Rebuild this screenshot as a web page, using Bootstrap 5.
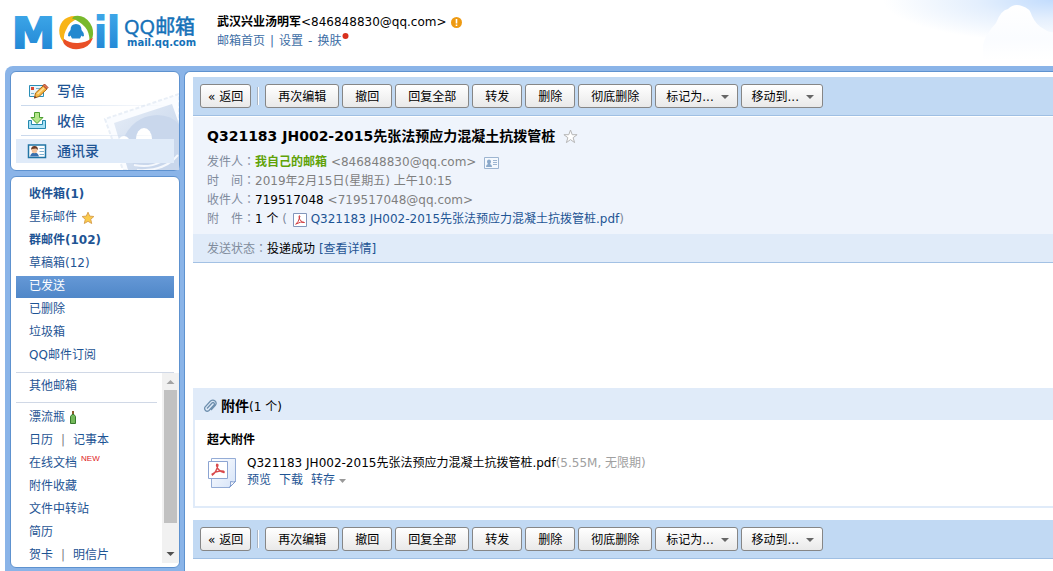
<!DOCTYPE html>
<html lang="zh-CN">
<head>
<meta charset="utf-8">
<meta name="viewport" content="width=device-width, initial-scale=1">
<title>QQ邮箱</title>
<link href="https://cdn.jsdelivr.net/npm/bootstrap@5.3.0/dist/css/bootstrap.min.css" rel="stylesheet">
<style>
body{font:12px/19px "DejaVu Sans","Noto Sans CJK SC",sans-serif;color:#000;background:#fff;height:100vh}
a{color:#1e5494;text-decoration:none}
a:hover{text-decoration:underline}
.colon{font-family:"Noto Sans CJK TC",sans-serif;line-height:1}
.top-bar{height:66px;padding:0 0 0 8px}
.sky{right:0;top:0;z-index:-1}
.account{padding:13px 0 0 19px}
.account a,.account-links{color:#3d6ea5}
.account-links{gap:5px}
.new-dot{margin-left:-5px}
.frame{background:#8ab4e8;border-radius:8px 0 0 0;margin-left:5px;padding:5px 0 0 5px;min-height:0}
.side{width:170px;gap:5px;padding-bottom:3px;margin-right:4px}
.panel{background:#fff;border:1px solid #5e92cf;border-radius:6px}
.main-actions{height:100px;padding:7px 5px}
.main-actions a{height:24px;font-size:14px;line-height:24px;padding-left:11px;gap:8px;font-weight:500}
.main-actions a.current{background:#e0ebf9}
.main-actions .rule{height:1px;margin:2px 5px 3px;background:linear-gradient(90deg,#c9d8ec,#fff0)}
.stamp{right:0;bottom:0}
.folders{padding:7px 5px 0}
.folders a{padding-left:13px;height:22px;line-height:21px;margin-bottom:1px}
.folders a.current{background:linear-gradient(#6598d6,#4f87c8);color:#fff}
.line{border-top:1px solid #d0d8e6}
.more{padding:2px 0 0 5px}
.more .entry{padding-left:13px;line-height:23px;height:23px}
.more .line{margin:4px 5px 3px 0}
.new-tag{font:8px/10px "Liberation Sans",sans-serif;color:#e01818;margin-left:4px;vertical-align:6px}
.scroll{width:17px;background:#f1f1f1;padding:0 2px}
.thumb{background:#c1c1c1;width:13px;height:133px}
.scroll svg{height:17px;width:13px;flex:none}
.reader{background:#fff;border:1px solid #5e92cf;border-width:1px 0 0 1px;border-radius:6px 0 0 0;padding:5px 0 0 8px;min-width:0;overflow:hidden}
.tools{background:#c1d9f3;border-bottom:1px solid #9fbfe3;height:39px;padding:7px;gap:3px}
.tools .btn{font-size:12px;line-height:20px;height:24px;padding:2px 12px;border:1px solid #868686;border-radius:3px;background:linear-gradient(#fff,#e9e9e9);color:#000;white-space:nowrap}
.tools .btn.back{padding:2px 7px}
.tools .btn.menu{padding:2px 8px 2px 10px}
.tools .btn.menu svg{margin-left:3px}
.tools .sep{width:2px;height:18px;margin:0 3px;background:linear-gradient(90deg,#a9b4c2 50%,#fff 50%)}
.mail-head{background:#eff4fc;border-top:1px solid #fff;padding:9px 14px 5px}
.mail-head h1{font-size:14px;line-height:21px;font-weight:700;margin-bottom:6px}
.mail-head h1 svg{margin-left:8px}
.mail-head div{height:19px}
.mail-head,.status{color:#7f8b9c}
.soft{color:#7f7f7f}
.sender{color:#5fa207;font-weight:700}
.status{background:#e0ebf9;border-bottom:1px solid #a3c1e4;padding:6px 14px 3px;height:29px}
.mail-body{height:125px}
.attach{border:2px solid #e0ebf9;border-width:0 0 2px 2px;margin-bottom:12px}
.attach h2{background:#e0ebf9;font-size:12px;line-height:32px;height:32px;padding-top:4px;padding-left:8px;gap:4px}
.attach h2 b{font-size:14px}
.attach-list{padding:11px 12px 17px}
.attach-list h3{font-size:12px;line-height:19px;font-weight:700;margin:0 0 5px}
.file{gap:10px;line-height:17px}
.file>svg{margin-top:2px;margin-bottom:-2px}
.file .acts{gap:8px}
.file-info{color:#a0a0a0}
</style>
</head>
<body class="d-flex flex-column overflow-hidden">
<header class="top-bar d-flex flex-shrink-0 position-relative">
  <svg class="sky position-absolute" width="180" height="66" viewBox="0 0 180 66" aria-hidden="true">
    <defs>
      <radialGradient id="sky" gradientUnits="userSpaceOnUse" cx="0" cy="0" r="1" gradientTransform="translate(180 0) scale(170 42)"><stop offset="0" stop-color="#c2dcfd"/><stop offset=".45" stop-color="#e4effd"/><stop offset="1" stop-color="#fff"/></radialGradient>
      <linearGradient id="cloud" x2="0" y2="1"><stop offset="0" stop-color="#fff"/><stop offset=".6" stop-color="#fafcff"/><stop offset="1" stop-color="#fff"/></linearGradient>
    </defs>
    <path fill="url(#sky)" d="M0 0H180V45H0z"/>
    <path fill="url(#cloud)" d="M110 45q2-10 13-22 5-13 12-14 6-6 14-3 8 2 10 10 4 9 12 13 6 4 9 3V60H110z"/>
  </svg>
  <svg class="flex-shrink-0" width="190" height="60" viewBox="8 0 190 60" role="img" aria-label="QQ邮箱">
    <defs><linearGradient id="blue" gradientUnits="userSpaceOnUse" x1="0" y1="14" x2="0" y2="49"><stop offset="0" stop-color="#3da6e8"/><stop offset="1" stop-color="#2389d6"/></linearGradient></defs>
    <g fill="url(#blue)" font-family="DejaVu Sans" font-weight="700">
      <text x="12" y="48" font-size="43" stroke="url(#blue)" stroke-width="2">M</text>
      <text y="48" x="93 106" font-size="44">il</text>
    </g>
    <circle cx="76" cy="32.500" r="19" fill="#fff"/>
    <path fill="#f8b416" d="M75 16C64 16 58 24 59.500 34q1 6 5.500 9.500-2.500-6 .5-12.500Q69 21 79 18.500q2-.5 2-1-3-1.500-6-1.500z"/>
    <path fill="#78b92c" d="M75 16q9-1.500 15 7 4.500 7 2.500 14.500l-3 3.500q0-9-4.500-14Q79 20.500 72 18.500q1-2 3-2.500z"/>
    <path fill="#e94f26" d="M64 39q6 4.500 14 4 8-.5 12.500-4 3-2 2 0Q89 48 79 49q-9 1-14-4-3-3-1-6z"/>
    <path fill="#2388cf" d="M76 24q5.500 0 5.500 6 3 3 2.500 6-1.500 1-2.500-.5l-1.500 3h-8l-1.500-3q-1 1.500-2.500.5-.5-3 2.500-6 0-6 5.500-6z"/>
    <g fill="#1471b8" stroke="#1471b8">
      <text x="124" y="34" font-size="20" font-family="Open Sans, Noto Sans CJK SC" stroke-width=".5">QQ<tspan font-family="Noto Sans CJK SC">邮箱</tspan></text>
      <text x="127" y="46" font-size="10" font-family="DejaVu Sans" font-weight="700" stroke="none">mail.qq.com</text>
    </g>
  </svg>
  <div class="account">
    <div class="d-flex align-items-center"><b>武汉兴业汤明军</b><span>&lt;846848830@qq.com&gt;</span>
      <svg class="ms-1" width="11" height="11" viewBox="0 0 11 11" aria-hidden="true"><circle cx="5.500" cy="5.500" r="5.500" fill="#ee9a12"/><path fill="#fff" d="M4.700 2h1.600v4.500H4.700zM4.700 7.500h1.600V9H4.700z"/></svg></div>
    <nav class="account-links d-flex"><a href="#">邮箱首页</a><span>|</span><a href="#">设置</a><span>-</span><a href="#">换肤</a>
      <svg class="new-dot" width="8" height="8" viewBox="0 0 8 8" aria-hidden="true"><circle cx="4.500" cy="4" r="3" fill="#d8301d"/></svg></nav>
  </div>
</header>

<div class="frame d-flex flex-grow-1">
  <aside class="side d-flex flex-column flex-shrink-0">
    <nav class="panel main-actions position-relative flex-shrink-0">
      <svg class="stamp position-absolute" width="77" height="78" viewBox="0 0 77 78" aria-hidden="true">
        <defs><linearGradient id="st" x2="1" y2="1"><stop offset="0" stop-color="#e6edf7"/><stop offset="1" stop-color="#c3d3ea"/></linearGradient></defs>
        <path d="M77 2 3 27l18 51h56z" fill="#fafcff" stroke="#e9eff7" stroke-width="2" stroke-dasharray="4 2"/>
        <path d="M70 12 12 31l14 47h51V32z" fill="url(#st)"/>
        <path d="M20 50Q30 24 55 23q15 0 22 10v45H40q-18-10-20-28z" fill="#c9d7ec"/>
        <ellipse cx="42" cy="47" rx="8" ry="11" fill="#fff"/><ellipse cx="22" cy="51" rx="6" ry="7" fill="#fff"/>
        <path d="M32 73q25 5 39-14M35 78q27 2 41-15" fill="none" stroke="#f5f8fd" stroke-width="2"/>
      </svg>
      <a href="#" class="d-flex align-items-center position-relative">
        <svg width="22" height="18" viewBox="0 0 22 18"><path fill="#eaf6fc" stroke="#2a8eb6" d="M2.500 3.500h14v11h-14z"/><path fill="#d94a32" d="M4 5h3v3H4z"/><path stroke="#7bb2cd" d="M9 6.500h4M4 11.500h3"/><path fill="#f9b945" stroke="#a86a16" d="m7.500 16 1-5 8-7.500 3.500 3.500-8 7.500z"/><path fill="#e37850" stroke="#a9452c" d="m16 3.500 1.500-1.500 3.500 3.500-1.500 1.500z"/><path fill="#fde2a0" d="m10 11.500 6.500-6 1 1-6.500 6z"/><path fill="#634" d="m7 16.500 1-2.500 1.500 1.500z"/></svg>写信</a>
      <div class="rule position-relative"></div>
      <a href="#" class="d-flex align-items-center position-relative">
        <svg width="22" height="18" viewBox="0 0 22 18"><path fill="#a9e1f5" stroke="#2489ae" d="M1.500 8.500h3v4h11v-4h3v8h-17z"/><path fill="#b5e68a" stroke="#4a9d2f" d="M7.500.5h5v5h3.500L10 11.500 4 5.500h3.500z"/></svg>收信</a>
      <div class="rule position-relative"></div>
      <a href="#" class="current d-flex align-items-center position-relative">
        <svg width="22" height="18" viewBox="0 0 22 18"><path fill="#fff" stroke="#2275a5" stroke-width="1.500" d="M1.500 3h17v12.500h-17z"/><path fill="#3970ae" d="M3 14.500q1-4 4.500-4t4.500 4z"/><circle cx="7.500" cy="8.500" r="2.800" fill="#f4c39b"/><path fill="#6d3b24" d="M4 8q0-4 3.500-4T11 8L9 6.500 5 7z"/><path stroke="#7eb0d0" d="M12.500 6.500H17M12.500 9.500H17M12.500 12.500H17"/></svg>通讯录</a>
    </nav>
    <div class="panel d-flex flex-column flex-grow-1 overflow-hidden">
      <nav class="folders d-flex flex-column flex-shrink-0">
        <a href="#"><b>收件箱(1)</b></a>
        <a href="#">星标邮件 <svg width="14" height="14" viewBox="0 0 14 14" aria-hidden="true"><path fill="#fbcb4b" stroke="#d9a353" d="m7 1.200 1.700 3.900 4.200.4-3.200 2.800 1 4.200L7 10.300l-3.700 2.200 1-4.200L1.100 5.500l4.200-.4z"/></svg></a>
        <a href="#"><b>群邮件(102)</b></a>
        <a href="#">草稿箱(12)</a>
        <a href="#" class="current" aria-current="page">已发送</a>
        <a href="#">已删除</a>
        <a href="#">垃圾箱</a>
        <a href="#">QQ邮件订阅</a>
        <div class="line mt-1"></div>
      </nav>
      <div class="d-flex flex-grow-1 overflow-hidden mb-1">
        <nav class="more flex-grow-1">
          <div class="entry"><a href="#">其他邮箱</a></div>
          <div class="line"></div>
          <div class="entry"><a href="#">漂流瓶 <svg width="8" height="13" viewBox="0 0 8 13" aria-hidden="true"><path fill="#8a5a2b" d="M3 0h2v3H3z"/><path fill="#74b95a" stroke="#397a2c" d="M3 3.500h2l1.500 2v7h-5v-7z"/></svg></a></div>
          <div class="entry"><a href="#">日历</a><span class="soft px-2">|</span><a href="#">记事本</a></div>
          <div class="entry"><a href="#">在线文档<span class="new-tag">NEW</span></a></div>
          <div class="entry"><a href="#">附件收藏</a></div>
          <div class="entry"><a href="#">文件中转站</a></div>
          <div class="entry"><a href="#">简历</a></div>
          <div class="entry"><a href="#">贺卡</a><span class="soft px-2">|</span><a href="#">明信片</a></div>
        </nav>
        <div class="scroll d-flex flex-column flex-shrink-0" aria-hidden="true">
          <svg viewBox="0 0 13 17"><path fill="#a3a3a3" d="m2.500 11 4-4 4 4z"/></svg>
          <div class="thumb"></div>
          <svg class="mt-auto" viewBox="0 0 13 17"><path fill="#505050" d="m2.500 6 4 4 4-4z"/></svg>
        </div>
      </div>
    </div>
  </aside>

  <main class="reader flex-grow-1">
    <div class="tools d-flex" role="toolbar">
      <button type="button" class="btn back">« 返回</button><span class="sep align-self-center"></span>
      <button type="button" class="btn">再次编辑</button>
      <button type="button" class="btn">撤回</button>
      <button type="button" class="btn">回复全部</button>
      <button type="button" class="btn">转发</button>
      <button type="button" class="btn">删除</button>
      <button type="button" class="btn">彻底删除</button>
      <button type="button" class="btn menu" aria-haspopup="true">标记为... <svg width="8" height="6" viewBox="0 0 8 6" aria-hidden="true"><path fill="#666" d="M0 0h8L4 4z"/></svg></button>
      <button type="button" class="btn menu" aria-haspopup="true">移动到... <svg width="8" height="6" viewBox="0 0 8 6" aria-hidden="true"><path fill="#666" d="M0 0h8L4 4z"/></svg></button>
    </div>
    <section class="mail-head">
      <h1 class="text-black d-flex align-items-center">Q321183 JH002-2015先张法预应力混凝土抗拨管桩
        <svg width="15" height="15" viewBox="0 0 15 15" aria-hidden="true"><path fill="#fff" stroke="#b5b5b5" d="m7.500 1 1.700 4.700h4.900l-4 3 1.500 4.900-4.100-3-4.100 3 1.500-4.900-4-3h4.900z"/></svg></h1>
      <div>发件人<span class="colon" lang="zh-TW">：</span><span class="sender">我自己的邮箱</span> <span class="soft">&lt;846848830@qq.com&gt;</span>
        <svg class="ms-1" width="15" height="12" viewBox="0 0 15 12" aria-hidden="true"><path fill="#f5f9fe" stroke="#9db5d1" d="M.5.500h14v11H.5z"/><path fill="#8ba9ca" d="M2 10q0-2.500 2-3-1-1-1-2.500Q3 2.500 5 2.500t2 2Q7 6 6 7q2 .5 2 3z"/><path stroke="#9db5d1" d="M9 3.500h4M9 5.500h4M9 7.500h4"/></svg></div>
      <div>时　间<span class="colon" lang="zh-TW">：</span><span class="soft">2019年2月15日(星期五) 上午10:15</span></div>
      <div>收件人<span class="colon" lang="zh-TW">：</span><span class="text-black">719517048</span> <span class="soft">&lt;719517048@qq.com&gt;</span></div>
      <div>附　件<span class="colon" lang="zh-TW">：</span><span class="text-black">1 个</span> ( <svg width="16" height="14" viewBox="-2 0 16 14" aria-hidden="true"><path fill="#fff" stroke="#8296bb" d="M.5.500h13v13H.5z"/><path fill="none" stroke="#d13c40" d="M2.500 11.500Q6 9 7 3 6 2 6 4q1 5 5.500 5.500Q8 8 3 11"/></svg> <a href="#">Q321183 JH002-2015先张法预应力混凝土抗拨管桩.pdf</a>)</div>
    </section>
    <div class="status">发送状态<span class="colon" lang="zh-TW">：</span><span class="text-black">投递成功</span> <a href="#">[查看详情]</a></div>
    <div class="mail-body"></div>
    <section class="attach">
      <h2 class="d-flex align-items-center m-0"><svg width="14" height="14" viewBox="0 0 14 14" aria-hidden="true"><path fill="none" stroke="#6d8fae" stroke-width="1.300" d="M4 9.500 9 4q1.200-1 2 0t0 2l-5 5.500q-2 1.500-3.500 0T2 8l5.500-6Q10 .2 12 2t.5 4L8 11"/></svg><span class="fw-normal"><b>附件</b>(1 个)</span></h2>
      <div class="attach-list">
        <h3>超大附件</h3>
        <div class="file d-flex">
          <svg width="30" height="33" viewBox="0 0 30 33" aria-hidden="true"><defs><linearGradient id="pg" x2="1" y2="1"><stop offset="0" stop-color="#fff"/><stop offset="1" stop-color="#d5e3f8"/></linearGradient></defs><path fill="url(#pg)" stroke="#94acd6" d="M4.500 1.500h24v23l-6 6h-18z"/><path fill="#fff" stroke="#7f9bcd" d="M22.500 30.500q2-2 1-6 3 1 5 0z"/><path fill="#fff" stroke="#8ca4d2" d="M1.500 4.500h19v17h-19z"/><path fill="none" stroke="#d8484a" stroke-width="1.300" d="M5 18.500Q9.500 15 11 8q-1.500-2-1.500.5Q11 14 17 15.500q1-2-4-1.500-5 .5-8.500 3.500"/></svg>
          <div>
            <div>Q321183 JH002-2015先张法预应力混凝土抗拨管桩.pdf<span class="file-info">(5.55M, 无限期)</span></div>
            <div class="acts d-flex"><a href="#">预览</a><a href="#">下载</a><a href="#">转存 <svg class="align-middle" width="7" height="4" viewBox="0 0 7 4" aria-hidden="true"><path fill="#999" d="M0 0h7L3.500 4z"/></svg></a></div>
          </div>
        </div>
      </div>
    </section>
    <div class="tools d-flex" role="toolbar">
      <button type="button" class="btn back">« 返回</button><span class="sep align-self-center"></span>
      <button type="button" class="btn">再次编辑</button>
      <button type="button" class="btn">撤回</button>
      <button type="button" class="btn">回复全部</button>
      <button type="button" class="btn">转发</button>
      <button type="button" class="btn">删除</button>
      <button type="button" class="btn">彻底删除</button>
      <button type="button" class="btn menu" aria-haspopup="true">标记为... <svg width="8" height="6" viewBox="0 0 8 6" aria-hidden="true"><path fill="#666" d="M0 0h8L4 4z"/></svg></button>
      <button type="button" class="btn menu" aria-haspopup="true">移动到... <svg width="8" height="6" viewBox="0 0 8 6" aria-hidden="true"><path fill="#666" d="M0 0h8L4 4z"/></svg></button>
    </div>
  </main>
</div>
<script src="https://cdn.jsdelivr.net/npm/bootstrap@5.3.0/dist/js/bootstrap.bundle.min.js"></script>
</body>
</html>
